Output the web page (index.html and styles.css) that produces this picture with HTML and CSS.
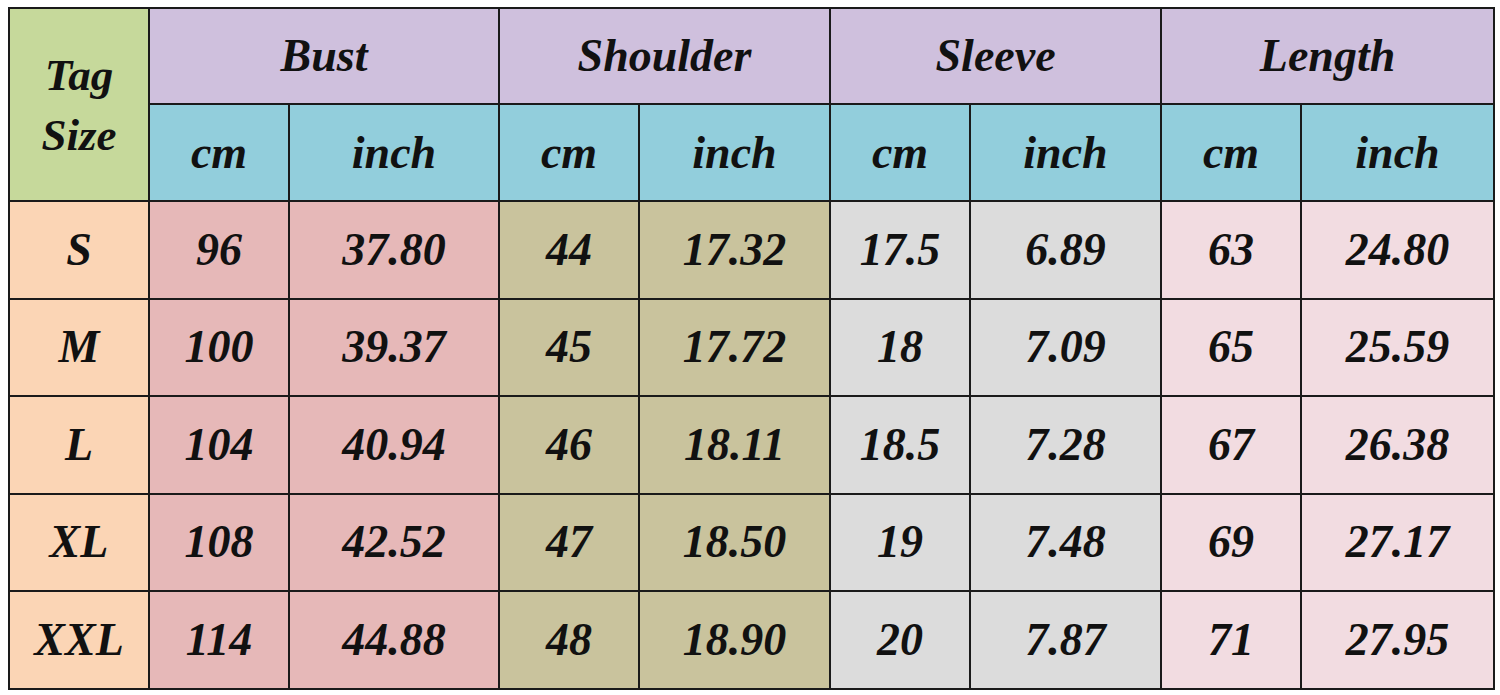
FILE: index.html
```html
<!DOCTYPE html>
<html>
<head>
<meta charset="utf-8">
<link rel="stylesheet" href="styles.css">
</head>
<body>
<table class="chart">
  <colgroup>
    <col class="c-size">
    <col class="c-a"><col class="c-b">
    <col class="c-a"><col class="c-c">
    <col class="c-a"><col class="c-c">
    <col class="c-a"><col class="c-d">
  </colgroup>
  <thead>
    <tr class="r-head">
      <th rowspan="2" class="tag">Tag<br>Size</th>
      <th colspan="2" class="grp">Bust</th>
      <th colspan="2" class="grp">Shoulder</th>
      <th colspan="2" class="grp">Sleeve</th>
      <th colspan="2" class="grp">Length</th>
    </tr>
    <tr class="r-unit">
      <th class="unit">cm</th><th class="unit">inch</th>
      <th class="unit">cm</th><th class="unit">inch</th>
      <th class="unit">cm</th><th class="unit">inch</th>
      <th class="unit">cm</th><th class="unit">inch</th>
    </tr>
  </thead>
  <tbody>
    <tr><td class="sz">S</td><td class="bust">96</td><td class="bust">37.80</td><td class="sh">44</td><td class="sh">17.32</td><td class="sl">17.5</td><td class="sl">6.89</td><td class="ln">63</td><td class="ln">24.80</td></tr>
    <tr><td class="sz">M</td><td class="bust">100</td><td class="bust">39.37</td><td class="sh">45</td><td class="sh">17.72</td><td class="sl">18</td><td class="sl">7.09</td><td class="ln">65</td><td class="ln">25.59</td></tr>
    <tr><td class="sz">L</td><td class="bust">104</td><td class="bust">40.94</td><td class="sh">46</td><td class="sh">18.11</td><td class="sl">18.5</td><td class="sl">7.28</td><td class="ln">67</td><td class="ln">26.38</td></tr>
    <tr><td class="sz">XL</td><td class="bust">108</td><td class="bust">42.52</td><td class="sh">47</td><td class="sh">18.50</td><td class="sl">19</td><td class="sl">7.48</td><td class="ln">69</td><td class="ln">27.17</td></tr>
    <tr><td class="sz">XXL</td><td class="bust">114</td><td class="bust">44.88</td><td class="sh">48</td><td class="sh">18.90</td><td class="sl">20</td><td class="sl">7.87</td><td class="ln">71</td><td class="ln">27.95</td></tr>
  </tbody>
</table>
</body>
</html>
```
FILE: styles.css
```css
html, body {
  background: #ffffff;
}
body {
  margin: 7px 0 0 8px;
  font-family: "Liberation Serif", "DejaVu Serif", serif;
}
.chart {
  border-collapse: collapse;
  table-layout: fixed;
  width: 1486px;
  border: 2px solid #1a1a1a;
}
.c-size { width: 140px; }
.c-a { width: 140px; }
.c-b { width: 210px; }
.c-c { width: 191px; }
.c-d { width: 193px; }
.chart th, .chart td {
  border: 2px solid #1a1a1a;
  padding: 0;
  text-align: center;
  vertical-align: middle;
  font-style: italic;
  font-weight: bold;
  color: #111111;
  font-size: 46px;
  line-height: 1;
}
.r-head { height: 96px; }
.r-unit { height: 97px; }
tbody tr { height: 97.5px; }
.chart .tag {
  background: #c6d99b;
  font-size: 45px;
  line-height: 60px;
}
.chart .grp {
  background: #cfc0dd;
}
.chart .unit {
  background: #92cedc;
}
.sz { background: #fbd5b5; }
.bust { background: #e6b8b8; }
.sh { background: #c9c39d; }
.sl { background: #dcdcdc; }
.ln { background: #f2dce1; }
```
